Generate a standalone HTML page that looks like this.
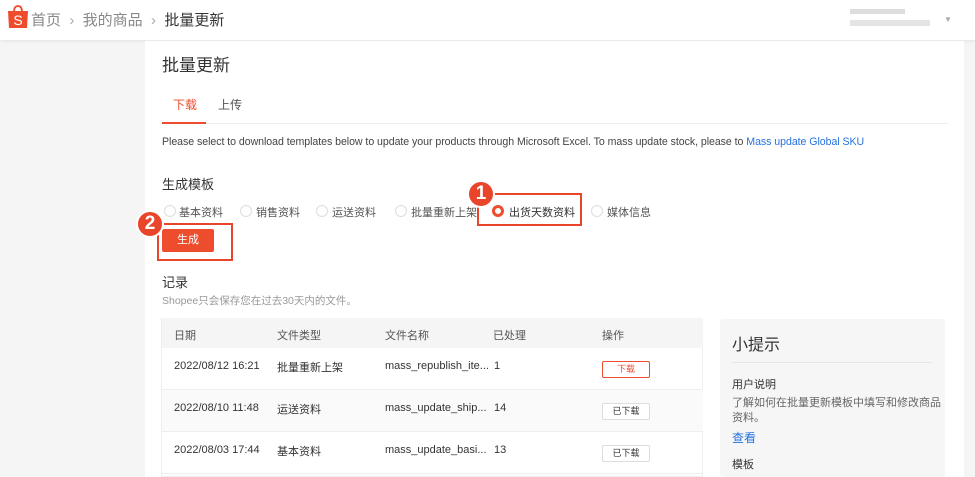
<!DOCTYPE html>
<html><head><meta charset="utf-8"><style>
*{margin:0;padding:0;box-sizing:border-box}
body{width:975px;height:477px;overflow:hidden;background:#f5f5f5;font-family:"Liberation Sans","Noto Sans CJK SC",sans-serif;color:#333;position:relative}
.a{position:absolute;white-space:nowrap}
.hdr{left:0;top:0;width:975px;height:40px;background:#fff;box-shadow:0 1px 4px rgba(0,0,0,.08)}
.panel{left:145px;top:41px;width:819px;height:436px;background:#fff}
.radio{width:12px;height:12px;border:1px solid #ddd;border-radius:50%;background:#fff}
.t{font-size:11px;color:#333}
.row{left:162px;width:541px;height:42px;border-bottom:1px solid #eee}
.btn{width:48px;height:17px;border:1px solid #ddd;border-radius:2px;font-size:9px;text-align:center;line-height:15px;background:#fff}
.badge{width:28px;height:28px;border-radius:50%;background:#e8452b;border:2px solid #fff;color:#fff;font-weight:bold;font-size:19px;text-align:center;line-height:24px}
</style></head><body>
<div class="a hdr"></div>
<svg class="a" style="left:7px;top:4px" width="22" height="25" viewBox="0 0 22 25"><path d="M7 8 Q7 2 11 2 Q15 2 15 8" fill="none" stroke="#ee4d2d" stroke-width="1.8"/><path d="M1 7 H21 L20 24 H2 Z" fill="#ee4d2d"/><text x="11" y="21" font-size="14" fill="#fff" text-anchor="middle" font-family="Liberation Sans">S</text></svg>
<div class="a" style="left:31px;top:9px;font-size:15px;color:#888">首页 &nbsp;<span style="color:#aaa">›</span>&nbsp; 我的商品 &nbsp;<span style="color:#aaa">›</span>&nbsp; <span style="color:#333">批量更新</span></div>
<div class="a" style="left:850px;top:9px;width:55px;height:5px;background:#ddd"></div>
<div class="a" style="left:850px;top:20px;width:80px;height:6px;background:#e4e4e4"></div>
<div class="a" style="left:944px;top:15px;font-size:8px;color:#aaa">▼</div>
<div class="a panel"></div>
<div class="a" style="left:162px;top:51px;font-size:17px;color:#333">批量更新</div>
<div class="a" style="left:173px;top:96px;font-size:12px;color:#ee4d2d">下载</div>
<div class="a" style="left:218px;top:96px;font-size:12px;color:#555">上传</div>
<div class="a" style="left:162px;top:123px;width:786px;height:1px;background:#eee"></div>
<div class="a" style="left:162px;top:122px;width:44px;height:2px;background:#ee4d2d"></div>
<div class="a" style="left:162px;top:136px;font-size:10.6px;color:#444;letter-spacing:-0.05px">Please select to download templates below to update your products through Microsoft Excel. To mass update stock, please to <span style="color:#2673dd">Mass update Global SKU</span></div>
<div class="a" style="left:162px;top:174px;font-size:13px;color:#333">生成模板</div>
<div class="a radio" style="left:164px;top:205px"></div><div class="a t" style="left:179px;top:204px;color:#555">基本资料</div>
<div class="a radio" style="left:240px;top:205px"></div><div class="a t" style="left:256px;top:204px;color:#555">销售资料</div>
<div class="a radio" style="left:316px;top:205px"></div><div class="a t" style="left:332px;top:204px;color:#555">运送资料</div>
<div class="a radio" style="left:395px;top:205px"></div><div class="a t" style="left:411px;top:204px;color:#555">批量重新上架</div>
<div class="a radio" style="left:492px;top:205px;border:3px solid #ee4d2d"></div><div class="a t" style="left:509px;top:204px">出货天数资料</div>
<div class="a radio" style="left:591px;top:205px"></div><div class="a t" style="left:607px;top:204px;color:#555">媒体信息</div>
<div class="a" style="left:477px;top:193px;width:105px;height:33px;border:2px solid #e8452b"></div>
<div class="a badge" style="left:467px;top:180px">1</div>
<div class="a" style="left:162px;top:229px;width:52px;height:23px;background:#ee4d2d;border-radius:2px;color:#fff;font-size:11px;text-align:center;line-height:23px">生成</div>
<div class="a" style="left:157px;top:223px;width:76px;height:38px;border:2px solid #e8452b"></div>
<div class="a badge" style="left:136px;top:210px">2</div>
<div class="a" style="left:162px;top:272px;font-size:13px;color:#333">记录</div>
<div class="a" style="left:162px;top:293px;font-size:10.5px;color:#999">Shopee只会保存您在过去30天内的文件。</div>
<div class="a" style="left:161px;top:318px;width:542px;height:159px;border:1px solid #eee;background:#fff"></div>
<div class="a row" style="top:318px;height:30px;background:#f5f5f5;border:none"></div>
<div class="a row" style="top:348px"></div>
<div class="a row" style="top:390px;background:#fafafa"></div>
<div class="a row" style="top:432px"></div>
<div class="a t" style="left:174px;top:327px;color:#555">日期</div>
<div class="a t" style="left:277px;top:327px;color:#555">文件类型</div>
<div class="a t" style="left:385px;top:327px;color:#555">文件名称</div>
<div class="a t" style="left:493px;top:327px;color:#555">已处理</div>
<div class="a t" style="left:602px;top:327px;color:#555">操作</div>
<div class="a t" style="left:174px;top:360px">2022/08/12 16:21</div><div class="a t" style="left:277px;top:359px">批量重新上架</div><div class="a t" style="left:385px;top:360px">mass_republish_ite...</div><div class="a t" style="left:494px;top:360px">1</div>
<div class="a btn" style="left:602px;top:361px;border-color:#ee4d2d;color:#ee4d2d">下载</div>
<div class="a t" style="left:174px;top:402px">2022/08/10 11:48</div><div class="a t" style="left:277px;top:401px">运送资料</div><div class="a t" style="left:385px;top:402px">mass_update_ship...</div><div class="a t" style="left:494px;top:402px">14</div>
<div class="a btn" style="left:602px;top:403px">已下载</div>
<div class="a t" style="left:174px;top:444px">2022/08/03 17:44</div><div class="a t" style="left:277px;top:443px">基本资料</div><div class="a t" style="left:385px;top:444px">mass_update_basi...</div><div class="a t" style="left:494px;top:444px">13</div>
<div class="a btn" style="left:602px;top:445px">已下载</div>
<div class="a" style="left:720px;top:319px;width:225px;height:158px;background:#f6f6f6;border-radius:3px"></div>
<div class="a" style="left:732px;top:331px;font-size:16px;color:#333">小提示</div>
<div class="a" style="left:732px;top:362px;width:200px;height:1px;background:#e5e5e5"></div>
<div class="a t" style="left:732px;top:376px">用户说明</div>
<div class="a" style="left:732px;top:396px;font-size:11px;color:#666;line-height:15px">了解如何在批量更新模板中填写和修改商品<br>资料。</div>
<div class="a t" style="left:732px;top:429px;color:#2673dd;font-size:12px">查看</div>
<div class="a t" style="left:732px;top:456px">模板</div>
</body></html>
